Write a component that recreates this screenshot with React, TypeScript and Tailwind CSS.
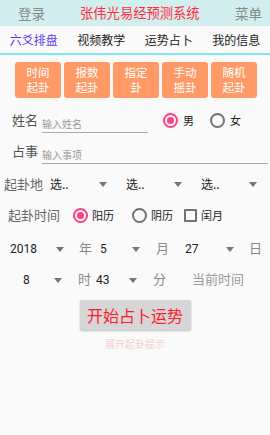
import React from 'react';

const FONT = { fontFamily: '"Noto Sans CJK SC", "Noto Sans", sans-serif' };
const NUM_FONT = { fontFamily: 'Roboto, "Noto Sans CJK SC", sans-serif' };

const Radio: React.FC<{ checked?: boolean }> = ({ checked }) => (
  <span
    className={`flex h-[15px] w-[15px] items-center justify-center rounded-full border-2 ${
      checked ? 'border-[#ff4081]' : 'border-[#737373]'
    }`}
  >
    {checked && <span className="h-[7px] w-[7px] rounded-full bg-[#ff4081]" />}
  </span>
);

const Arrow: React.FC = () => (
  <svg width="8" height="5" viewBox="0 0 8 5" className="shrink-0">
    <path d="M0 0 L8 0 L4 5 Z" fill="#757575" />
  </svg>
);

const Spinner: React.FC<{ value: string; width: string }> = ({ value, width }) => (
  <div className={`flex items-center justify-between ${width}`}>
    <span className="text-[12px] text-[#222]">{value}</span>
    <Arrow />
  </div>
);

const BUTTONS = [
  ['时间', '起卦'],
  ['报数', '起卦'],
  ['指定', '卦'],
  ['手动', '摇卦'],
  ['随机', '起卦'],
];

const TABS = ['六爻排盘', '视频教学', '运势占卜', '我的信息'];

const App: React.FC = () => {
  return (
    <div className="h-[435px] w-[270px] overflow-hidden bg-[#fafafa]" style={FONT}>
      <div className="flex h-[26px] items-center bg-[#d3eeee]">
        <span className="ml-[18px] text-[13.5px] text-[#888]">登录</span>
        <span className="ml-[35px] text-[13.3px] text-[#ff2d3c]">张伟光易经预测系统</span>
        <span className="ml-auto mr-[8px] text-[13.5px] text-[#888]">菜单</span>
      </div>

      <div className="grid h-[27px] grid-cols-4 items-center text-[12px]">
        {TABS.map((t, i) => (
          <span key={t} className={`text-center ${i === 0 ? 'text-[#5a3cf0]' : 'text-[#222]'}`}>
            {t}
          </span>
        ))}
      </div>
      <div className="h-[2px] bg-[#80e9ef]" />

      <div className="mt-[7px] flex gap-[3px] pl-[15px]">
        {BUTTONS.map((b) => (
          <div
            key={b.join()}
            className="flex h-[36px] w-[46px] flex-col items-center justify-center rounded-[3px] bg-[#ff9a66] text-[11.5px] leading-[15px] text-white"
          >
            <span>{b[0]}</span>
            <span>{b[1]}</span>
          </div>
        ))}
      </div>

      <div className="mt-[13px] flex h-[18px] items-center">
        <span className="ml-[12px] text-[13px] leading-[18px] text-[#555]">姓名</span>
        <div className="ml-[4px] mt-[8px] flex h-[17px] w-[106px] items-center border-b border-[#aaa]">
          <span className="text-[10px] text-[#999]">输入姓名</span>
        </div>
        <span className="ml-[15px]">
          <Radio checked />
        </span>
        <span className="ml-[5px] text-[11px] text-[#222]">男</span>
        <span className="ml-[16px]">
          <Radio />
        </span>
        <span className="ml-[5px] text-[11px] text-[#222]">女</span>
      </div>

      <div className="mt-[13px] flex h-[18px] items-center">
        <span className="ml-[12px] text-[13px] leading-[18px] text-[#555]">占事</span>
        <div className="ml-[4px] mt-[8px] flex h-[17px] w-[226px] items-center border-b border-[#aaa]">
          <span className="text-[10px] text-[#999]">输入事项</span>
        </div>
      </div>

      <div className="mt-[15px] flex h-[18px] items-center">
        <span className="ml-[4px] w-[46px] text-[13px] text-[#666]">起卦地</span>
        <Spinner value="选.." width="w-[57px]" />
        <span className="ml-[19px]" />
        <Spinner value="选.." width="w-[56px]" />
        <span className="ml-[19px]" />
        <Spinner value="选.." width="w-[56px]" />
      </div>

      <div className="mt-[13px] flex h-[18px] items-center">
        <span className="ml-[8px] w-[65px] text-[13px] text-[#666]">起卦时间</span>
        <Radio checked />
        <span className="ml-[4px] text-[11px] text-[#222]">阳历</span>
        <span className="ml-[18px]">
          <Radio />
        </span>
        <span className="ml-[4px] text-[11px] text-[#222]">阴历</span>
        <span className="ml-[11px] h-[13px] w-[13px] rounded-[1px] border-2 border-[#737373]" />
        <span className="ml-[4px] text-[11px] text-[#222]">闰月</span>
      </div>

      <div className="mt-[16px] flex h-[18px] items-center text-[12px]" style={NUM_FONT}>
        <div className="ml-[10px] flex w-[54px] items-center justify-between">
          <span className="text-[#222]">2018</span>
          <Arrow />
        </div>
        <span className="ml-[15px] text-[13px] text-[#888]">年</span>
        <div className="ml-[8px] flex w-[40px] items-center justify-between">
          <span className="text-[#222]">5</span>
          <Arrow />
        </div>
        <span className="ml-[16px] text-[13px] text-[#888]">月</span>
        <div className="ml-[16px] flex w-[49px] items-center justify-between">
          <span className="text-[#222]">27</span>
          <Arrow />
        </div>
        <span className="ml-[15px] text-[13px] text-[#888]">日</span>
      </div>

      <div className="mt-[13px] flex h-[18px] items-center text-[12px]" style={NUM_FONT}>
        <div className="ml-[23px] flex w-[39px] items-center justify-between">
          <span className="text-[#222]">8</span>
          <Arrow />
        </div>
        <span className="ml-[16px] text-[13px] text-[#888]">时</span>
        <div className="ml-[5px] flex w-[41px] items-center justify-between">
          <span className="text-[#222]">43</span>
          <Arrow />
        </div>
        <span className="ml-[16px] text-[13px] text-[#888]">分</span>
        <span className="ml-[26px] text-[13px] text-[#999]">当前时间</span>
      </div>

      <div className="mt-[11px] flex justify-center">
        <div className="flex h-[30px] w-[111px] items-center justify-center rounded-[2px] bg-[#d6d6d6] text-[16px] text-[#ff1a2e] shadow-[0_1px_2px_rgba(0,0,0,0.25)]">
          开始占卜运势
        </div>
      </div>
      <div className="mt-[6px] text-center text-[10px] text-[#f7cfd0]">展开起卦提示</div>
    </div>
  );
};

export default App;
